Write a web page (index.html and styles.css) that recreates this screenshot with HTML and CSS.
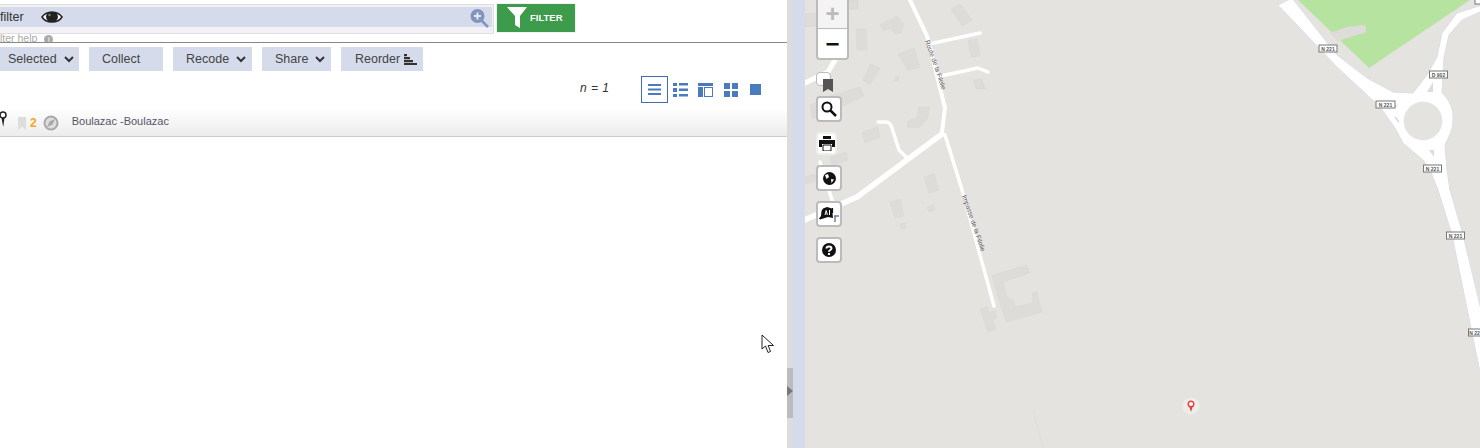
FILE: index.html
```html
<!DOCTYPE html>
<html lang="en">
<head>
    <meta charset="UTF-8">
    <title>Map records</title>
    <link rel="stylesheet" href="styles.css">
</head>
<body>
    <div class="records">
        <div class="filter-row">
            <div class="filter-box">
                <div class="filter-field">
                    <span class="filter-label">filter</span>
                    <svg class="eye" width="22" height="14" viewBox="0 0 22 14"><path d="M1 7C5 0.500 17 0.500 21 7C17 13.500 5 13.500 1 7Z" fill="#fff" stroke="#222" stroke-width="1.500"/><ellipse cx="11" cy="6.800" rx="6" ry="5.300" fill="#222"/><circle cx="8.500" cy="5" r="1.300" fill="#777"/></svg>
                    <svg class="zoom-plus" width="19" height="20" viewBox="0 0 19 20"><line x1="11" y1="12" x2="18" y2="19" stroke="#7e96bf" stroke-width="2.500"/><circle cx="7.500" cy="8" r="7" fill="#7e96bf"/><path d="M7.500 4.500V11.500M4 8H11" stroke="#e6eaf3" stroke-width="2"/></svg>
                </div>
            </div>
            <button class="filter-btn">
                <svg width="20" height="22" viewBox="0 0 20 22"><path d="M0 1H20L13 10V22L8 19V10Z" fill="#fff"/></svg>
                FILTER
            </button>
        </div>
        <div class="filter-help">lter help <span class="info">i</span></div>

        <div class="actions">
            <button class="action w-selected">Selected <svg class="chev" width="10" height="7" viewBox="0 0 10 7"><path d="M1 1L5 5L9 1" fill="none" stroke="#333" stroke-width="2"/></svg></button>
            <button class="action w-collect">Collect</button>
            <button class="action w-recode">Recode <svg class="chev" width="10" height="7" viewBox="0 0 10 7"><path d="M1 1L5 5L9 1" fill="none" stroke="#333" stroke-width="2"/></svg></button>
            <button class="action w-share">Share <svg class="chev" width="10" height="7" viewBox="0 0 10 7"><path d="M1 1L5 5L9 1" fill="none" stroke="#333" stroke-width="2"/></svg></button>
            <button class="action w-reorder">Reorder <svg width="13" height="11" viewBox="0 0 13 11"><path d="M0 0H3V2.200H0ZM0 3H6V5.200H0ZM0 6H9V8.200H0ZM0 9H13V11H0Z" fill="#333"/></svg></button>
        </div>

        <div class="view-row">
            <span class="count">n = 1</span>
            <div class="views">
                <span class="view active"><svg width="13" height="11" viewBox="0 0 13 11"><path d="M0 0H13V2H0ZM0 4.500H13V6.500H0ZM0 9H13V11H0Z"/></svg></span>
                <span class="view"><svg width="15" height="14" viewBox="0 0 15 14"><path d="M0 0H4V3H0ZM6 0H15V2.500H6ZM0 5H4V9H0ZM6 5.500H15V8H6ZM0 11H4V14H0ZM6 11H15V13.500H6Z"/></svg></span>
                <span class="view"><svg width="15" height="14" viewBox="0 0 15 14"><path d="M0 0H15V3H0ZM0 4H5V14H0ZM6 4H15V14H6ZM7 5V13H14V5Z" fill-rule="evenodd"/></svg></span>
                <span class="view"><svg width="14" height="14" viewBox="0 0 14 14"><path d="M0 0H6V6H0ZM8 0H14V6H8ZM0 8H6V14H0ZM8 8H14V14H8Z"/></svg></span>
                <span class="view"><svg width="11" height="11" viewBox="0 0 11 11"><path d="M0 0H11V11H0Z"/></svg></span>
            </div>
        </div>

        <div class="record">
            <svg class="record-pin" width="7" height="16" viewBox="0 0 7 16"><circle cx="3" cy="4" r="3" fill="#fff" stroke="#222" stroke-width="1.500"/><path d="M1.500 7L3.200 16L4.500 7" fill="#222"/></svg>
            <svg class="record-mark" width="8" height="13" viewBox="0 0 8 13"><path d="M0 0H8V13L4 9.500L0 13Z" fill="#ddd"/></svg>
            <span class="record-num">2</span>
            <svg class="record-compass" width="16" height="16" viewBox="0 0 16 16"><circle cx="8" cy="8" r="6.500" fill="#ddd" stroke="#a8a8a8" stroke-width="2"/><path d="M12 4L9.500 9.500L4 12L6.500 6.500Z" fill="#a8a8a8"/></svg>
            <span class="record-name">Boulazac -Boulazac</span>
        </div>

        <svg class="cursor" width="14" height="20" viewBox="0 0 14 20"><path d="M1 1V15L4.500 12L7 18.500L9.500 17.500L7.200 11.500H12.500Z" fill="#fff" stroke="#222" stroke-width="1"/></svg>
    </div>

    <div class="divider">
        <div class="divider-grey"><span class="handle"></span></div>
        <div class="divider-blue"></div>
    </div>

    <div class="map">
        <svg class="map-canvas" width="675" height="448" viewBox="805 0 675 448">
            <!-- park -->
            <polygon points="1298,0 1369,68 1470,0" fill="#b7e3a0"/>

            <!-- buildings -->
            <g fill="#dedcd8" stroke="#d8d6d2" stroke-width="0.500">
                <polygon points="1330,33 1347,27 1365,25 1366,32 1338,41"/>
                <polygon points="951,9 960,4 972,20 962,26"/>
                <polygon points="805,14 815,13 816,26 805,27"/>
                <polygon points="858,0 858,9 848,9 846,0"/>
                <polygon points="880,25 897,16 904,24 901,33 895,34 890,28 884,31"/>
                <polygon points="856,29 866,29 867,50 857,50"/>
                <polygon points="898,54 914,48 920,67 908,71"/>
                <polygon points="968,40 977,39 980,56 971,57"/>
                <polygon points="973,80 982,79 985,89 976,89"/>
                <polygon points="871,64 880,68 870,85 863,80"/>
                <polygon points="895,77 899,76 898,81 895,81"/>
                <polygon points="810,105 825,98 840,93 860,87 864,96 845,105 830,113 812,118"/>
                <polygon points="919,107 929,107 928,118 919,128 907,127 908,121 917,117"/>
                <polygon points="862,132 878,127 880,137 865,143"/>
                <polygon points="830,157 846,152 848,160 832,165"/>
                <polygon points="805,177 815,174 816,181 805,184"/>
                <polygon points="924,177 934,174 939,190 929,193"/>
                <polygon points="890,202 900,199 904,216 895,218"/>
                <polygon points="927,207 934,205 935,210 929,212"/>
                <polygon points="900,224 905,223 906,228 901,229"/>
                <polygon points="992,275 1000,273 1027,265 1029,273 1003,282 1007,297 1013,300 1015,307 1033,303 1032,293 1037,292 1042,312 1006,322 998,297"/>
                <polygon points="980,309 987,307 989,312 995,311 997,318 993,320 996,329 988,332 986,327"/>
            </g>

            <!-- minor roads -->
            <g fill="none" stroke="#fff" stroke-linejoin="round" stroke-linecap="round">
                <path d="M909,-2L927,36L945,108L942,132" stroke-width="4"/>
                <path d="M929,44L980,33" stroke-width="3.500"/>
                <path d="M941,76L978,68L988,72" stroke-width="3.500"/>
                <path d="M945,135L963,193L994,306" stroke-width="3.500"/>
                <path d="M878,122H886Q890,122 892,128L899,150L907,158" stroke-width="3.500"/>
                <path d="M820,162L833,203" stroke-width="3.500"/>
                <path d="M835,60L828,72L805,83" stroke-width="5"/>
                <path d="M800,222L857,197L942,134" stroke-width="5.500"/>
            </g>
            <path d="M1033,410L1043,448" stroke="#d5d8e3" stroke-width="1" stroke-dasharray="1 1" fill="none"/>

            <!-- main roads and roundabout -->
            <path d="M1292,-2L1337,55L1367,78L1393,92L1413,93L1427,75L1437,57L1442,33L1457,13L1482,5V11L1462,20L1449,35L1444,57L1442,93C1450,100 1454,110 1453,121C1453,130 1448,138 1445,145L1447,170L1450,190L1463,235L1496,372H1480L1452,235L1438,190L1430,170L1423,160L1403,143L1395,128L1380,107L1337,67L1278,5Z" fill="#fff" stroke="#dcdfe9" stroke-width="1" stroke-linejoin="round"/>
            <circle cx="1423" cy="121" r="19" fill="#e5e3df" stroke="#dcdfe9" stroke-width="0.600"/>
            <polygon points="1427,92 1433,82 1433,92" fill="#dedcd8"/>
            <polygon points="1429,150 1434,150 1434,157" fill="#dedcd8"/>
            <polygon points="1395,105 1398,105 1395,108" fill="#dedcd8"/>
            <path d="M1395,117L1399,122" stroke="#c9c9c9" stroke-width="1.200"/>

            <!-- road labels -->
            <g class="road-label">
                <text transform="translate(925,41) rotate(71)">Route de la Filolie</text>
                <text transform="translate(962,196) rotate(71)">Impasse de la Filolie</text>
            </g>
            <g class="shield">
                <rect x="1319" y="45" width="18" height="7"/><text x="1328" y="50.500">N 221</text>
                <rect x="1376" y="101" width="19" height="7"/><text x="1385.500" y="106.500">N 221</text>
                <rect x="1429.500" y="71" width="18" height="7"/><text x="1438.500" y="76.500">D 902</text>
                <rect x="1423.500" y="165" width="18" height="7"/><text x="1432.500" y="170.500">N 221</text>
                <rect x="1446.500" y="232" width="18" height="7"/><text x="1455.500" y="237.500">N 221</text>
                <rect x="1468.500" y="329" width="18" height="7"/><text x="1474.500" y="334.500">N 22</text>
                <rect x="1475" y="-3" width="18" height="7"/>
            </g>

            <!-- marker -->
            <circle cx="1191" cy="406" r="8.500" fill="#efedea"/>
            <circle cx="1191" cy="404" r="2.800" fill="#fff" stroke="#e5403c" stroke-width="1.400"/>
            <path d="M1189,406L1191,412L1193,406Z" fill="#e5403c"/>
        </svg>

        <div class="map-tools">
            <div class="zoom-ctrl">
                <span class="zoom-in">+</span>
                <span class="zoom-out">&minus;</span>
            </div>
            <div class="tool-bookmark">
                <svg width="10" height="13" viewBox="0 0 10 13"><path d="M0 0H10V13L5 10L0 13Z" fill="#555"/></svg>
            </div>
            <div class="tool">
                <svg width="16" height="16" viewBox="0 0 16 16"><circle cx="6" cy="6" r="4.500" fill="none" stroke="#111" stroke-width="2"/><path d="M9.500 9.500L15 15" stroke="#111" stroke-width="2.500"/></svg>
            </div>
            <div class="tool tool-print">
                <svg width="16" height="15" viewBox="0 0 16 15"><path d="M4 0H12V3H4ZM0 4H16V11H13V8H3V11H0Z" fill="#111"/><path d="M4 9H12V15H4Z" fill="#fff" stroke="#111" stroke-width="1"/></svg>
            </div>
            <div class="tool">
                <svg width="13" height="13" viewBox="0 0 13 13"><circle cx="6.500" cy="6.500" r="6.500" fill="#111"/><path d="M2 3L5 2L6 5L3.500 7ZM8 7L11 7.500L8.500 11Z" fill="#fff"/></svg>
            </div>
            <div class="tool">
                <svg width="20" height="15" viewBox="0 0 20 15"><path d="M4 1.500L8 0L13 1.500L14 11L9 10L1 12.500L0 11.500L2 9L2.500 4Z" fill="#111"/><path d="M6 8L7.200 3.500L8.400 8M10.500 3V8" fill="none" stroke="#fff" stroke-width="1"/><path d="M13.500 1V6" stroke="#111" stroke-width="1.200"/><path d="M15 9H20M16 9V15" stroke="#6f7f99" stroke-width="1.500" fill="none"/></svg>
            </div>
            <div class="tool">
                <svg width="14" height="14" viewBox="0 0 14 14"><circle cx="7" cy="7" r="7" fill="#111"/><path d="M4.500 5.500C4.500 2.800 9.500 2.800 9.500 5.300C9.500 7 7 7 7 8.800" fill="none" stroke="#fff" stroke-width="2"/><rect x="6" y="10" width="2" height="2" fill="#fff"/></svg>
            </div>
        </div>
    </div>
</body>
</html>
```

FILE: styles.css
```css
html, body {
    margin: 0;
    padding: 0;
    height: 100%;
    overflow: hidden;
}
body {
    display: flex;
    width: 1480px;
    height: 448px;
    font-family: 'Liberation Sans', Arial, sans-serif;
    color: #444;
    background: #fff;
}
button {
    font-family: inherit;
    border: none;
    cursor: pointer;
}

/* left panel */
.records {
    position: relative;
    width: 787px;
    flex: none;
    overflow: hidden;
}
.filter-row {
    display: flex;
    gap: 3px;
    padding-top: 4px;
}
.filter-box {
    width: 494px;
    height: 30px;
    box-sizing: border-box;
    padding-top: 2px;
    padding-right: 1px;
    border: 1px solid #dedede;
    border-left: none;
    background: #f3f1f5;
}
.filter-field {
    display: flex;
    align-items: center;
    height: 20px;
    background: #d5dbea;
}
.filter-label {
    font-size: 12.500px;
    color: #333;
    width: 41px;
}
.zoom-plus {
    margin-left: auto;
    margin-right: 3px;
    margin-top: 2px;
}
.filter-btn {
    display: flex;
    align-items: center;
    gap: 3px;
    width: 78px;
    height: 28px;
    padding: 0 0 2px 10px;
    font-size: 9.500px;
    font-weight: bold;
    color: #fff;
    background: #3d9b4c;
    outline: 1px solid #eef4ee;
}
.filter-help {
    height: 8px;
    font-size: 10.500px;
    line-height: 9px;
    color: #aaa;
    overflow: hidden;
    border-bottom: 1px solid #888;
}
.info {
    display: inline-block;
    width: 9px;
    height: 9px;
    margin-left: 4px;
    border-radius: 50%;
    background: #aaa;
    color: #fff;
    font-size: 7px;
    line-height: 9px;
    text-align: center;
    vertical-align: top;
    margin-top: 1px;
}
.actions {
    display: flex;
    gap: 10px;
    margin-top: 4px;
}
.action {
    display: flex;
    align-items: center;
    gap: 7px;
    height: 24px;
    padding: 0;
    font-size: 12.500px;
    color: #444;
    background: #d5dbea;
}
.w-selected { width: 79px; padding-left: 8px; }
.w-collect { width: 74px; padding-left: 13px; }
.w-recode { width: 79px; padding-left: 13px; }
.w-share { width: 69px; padding-left: 13px; }
.w-reorder { width: 82px; padding-left: 14px; gap: 4px; }

.view-row {
    display: flex;
    align-items: center;
    height: 27px;
    margin-top: 5px;
    padding-right: 19px;
}
.count {
    margin-left: 580px;
    margin-top: -3px;
    font-size: 12px;
    font-style: italic;
    color: #333;
    white-space: nowrap;
    word-spacing: 1px;
}
.views {
    display: flex;
    align-items: center;
    margin-left: auto;
}
.view {
    display: flex;
    align-items: center;
    justify-content: center;
    width: 25px;
    height: 25px;
}
.view svg {
    fill: #4a7bbf;
}
.view.active {
    border: 1px solid #3c6eb0;
}
.record {
    display: flex;
    align-items: center;
    height: 28px;
    margin-top: 5px;
    background: linear-gradient(#fff, #ececec);
    border-bottom: 1px solid #ccc;
}
.record-pin {
    margin-top: -7px;
    flex: none;
}
.record-mark {
    margin-left: 11px;
    margin-top: 2px;
}
.record-num {
    margin-left: 4px;
    margin-top: 2px;
    font-size: 12px;
    font-weight: bold;
    color: #f5a623;
}
.record-compass {
    margin-left: 6px;
    margin-top: 2px;
}
.record-name {
    margin-left: 13px;
    margin-top: -2px;
    font-size: 11px;
    color: #556;
}
.cursor {
    position: absolute;
    left: 761px;
    top: 334px;
}

/* splitter */
.divider {
    display: flex;
    width: 18px;
    flex: none;
}
.divider-grey {
    width: 6px;
    background: #dcdcdc;
    padding-top: 368px;
    box-sizing: border-box;
}
.handle {
    display: block;
    width: 6px;
    height: 50px;
    background: #bbb;
    position: relative;
}
.handle::after {
    content: "";
    position: absolute;
    left: 0;
    top: 18px;
    border-left: 6px solid #777;
    border-top: 5px solid transparent;
    border-bottom: 5px solid transparent;
}
.divider-blue {
    width: 12px;
    background: #d5dbea;
}

/* map */
.map {
    position: relative;
    flex: 1;
    background: #e5e3df;
    overflow: hidden;
}
.map-canvas {
    display: block;
}
.road-label text {
    font-size: 6.500px;
    fill: #555;
    font-family: 'Liberation Sans', Arial, sans-serif;
}
.shield rect {
    fill: #fff;
    stroke: #777;
    stroke-width: 1;
}
.shield text {
    font-size: 5px;
    font-weight: bold;
    fill: #555;
    text-anchor: middle;
    font-family: 'Liberation Sans', Arial, sans-serif;
}
.map-tools {
    position: absolute;
    left: 11px;
    top: -3px;
    display: flex;
    flex-direction: column;
    align-items: flex-start;
    gap: 10px;
}
.zoom-ctrl {
    display: flex;
    flex-direction: column;
    width: 33px;
    box-sizing: border-box;
    border: 2px solid #bbb;
    border-radius: 4px;
    overflow: hidden;
}
.zoom-in, .zoom-out {
    display: block;
    height: 29px;
    text-align: center;
    font-size: 24px;
    font-weight: bold;
    line-height: 29px;
}
.zoom-in {
    background: #f4f4f4;
    color: #bbb;
    border-bottom: 1px solid #bbb;
}
.zoom-out {
    background: #fff;
    color: #111;
}
.tool-bookmark {
    position: relative;
    width: 15px;
    height: 14px;
    margin-top: 2px;
    background: #fff;
    border: 1px solid #bbb;
    border-radius: 4px;
    box-sizing: border-box;
}
.tool-bookmark svg {
    position: absolute;
    left: 6px;
    top: 6px;
}
.tool {
    display: flex;
    align-items: center;
    justify-content: center;
    width: 26px;
    height: 26px;
    box-sizing: border-box;
    background: #fff;
    border: 2px solid #bbb;
    border-radius: 4px;
}
.tool-print {
    width: 21px;
    height: 23px;
    border-color: #eee;
}
```
